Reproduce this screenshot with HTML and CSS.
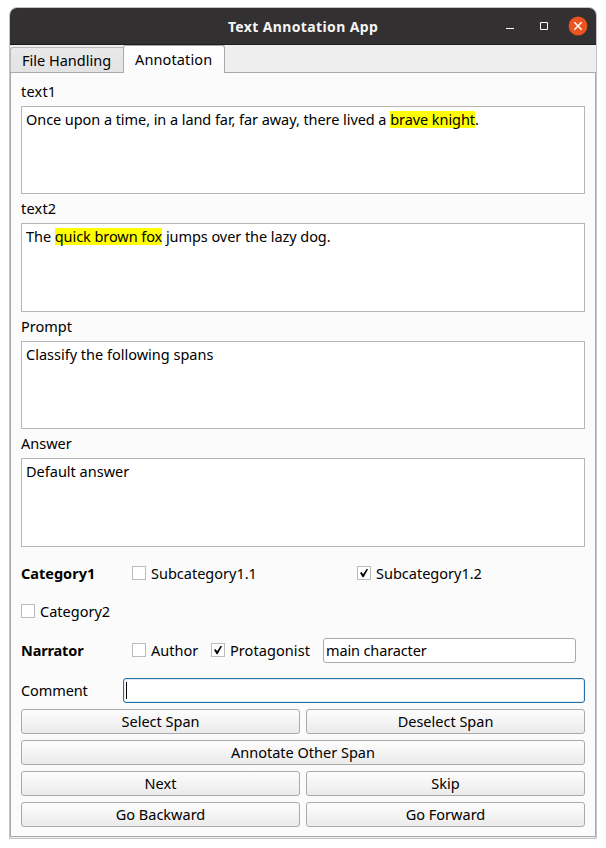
FILE: index.html
```html
<!DOCTYPE html>
<html lang="en">
<head>
<meta charset="utf-8">
<title>Text Annotation App</title>
<link rel="stylesheet" href="styles.css">
</head>
<body>
<div class="window">
  <header class="titlebar">
    <h1 class="title">Text Annotation App</h1>
    <div class="controls">
      <svg class="control" viewBox="0 0 20 20"><path d="M6 12.500h8" stroke="#fff" fill="none"/></svg>
      <svg class="control" viewBox="0 0 20 20"><path d="M6.500 6.500h7v7h-7z" stroke="#fff" fill="none"/></svg>
      <svg class="control" viewBox="0 0 20 20"><circle cx="10" cy="10" r="9.400" fill="#e95420"/><path d="M6.300 6.300l7.400 7.400M13.700 6.300l-7.400 7.400" stroke="#fff" stroke-width="1.500" fill="none"/></svg>
    </div>
  </header>
  <nav class="tabs">
    <div class="tab">File Handling</div>
    <div class="tab tab-active">Annotation</div>
  </nav>
  <main class="pane">
    <div class="label loose">text1</div>
    <div class="textbox tight">Once upon a time, in a land far, far away, there lived a <mark>brave knight</mark>.</div>
    <div class="label loose">text2</div>
    <div class="textbox tall tight">The <mark>quick brown fox</mark> jumps over the lazy dog.</div>
    <div class="label">Prompt</div>
    <div class="textbox">Classify the following spans</div>
    <div class="label">Answer</div>
    <div class="textbox tall">Default answer</div>

    <div class="row row-category1">
      <b class="group">Category1</b>
      <div class="check wide"><i class="box"></i>Subcategory1.1</div>
      <div class="check"><i class="box"><svg viewBox="0 0 12 12"><path d="M2 6L3.600 5.100L5.100 7.300L8.700 1.800L10 2.200L5.600 10.200L4.700 10.200Z"/></svg></i>Subcategory1.2</div>
    </div>
    <div class="row row-category2">
      <div class="check"><i class="box"></i>Category2</div>
    </div>
    <div class="row row-narrator">
      <b class="group narrator">Narrator</b>
      <div class="check author"><i class="box"></i>Author</div>
      <div class="check protagonist"><i class="box"><svg viewBox="0 0 12 12"><path d="M2 6L3.600 5.100L5.100 7.300L8.700 1.800L10 2.200L5.600 10.200L4.700 10.200Z"/></svg></i>Protagonist</div>
      <div class="input role">main character</div>
    </div>
    <div class="row row-comment">
      <div class="comment-label">Comment</div>
      <div class="input focused"><i class="caret"></i></div>
    </div>
    <div class="buttons">
      <div class="button">Select Span</div>
      <div class="button">Deselect Span</div>
      <div class="button full">Annotate Other Span</div>
      <div class="button">Next</div>
      <div class="button">Skip</div>
      <div class="button">Go Backward</div>
      <div class="button">Go Forward</div>
    </div>
  </main>
</div>
</body>
</html>
```
FILE: styles.css
```css
* { box-sizing: border-box; }
body {
  margin: 0;
  padding: 7px 9px;
  background: #fff;
  color: #000;
  font: 14.5px/18px "Noto Sans", "Open Sans", sans-serif;
  white-space: nowrap;
}
.window {
  width: 588px;
  height: 832px;
  display: flex;
  flex-direction: column;
  border: 1px solid #c3c3c3;
  border-radius: 8px 8px 0 0;
  background: #eee;
  overflow: hidden;
}
.titlebar {
  flex: none;
  height: 37px;
  display: grid;
  grid-template-columns: 1fr auto 1fr;
  align-items: center;
  background: #323030;
  border-bottom: 1px solid #1c1c1c;
  color: #f5f5f5;
}
.title {
  grid-column: 2;
  margin: 2px 0 0;
  font-size: 14px;
  font-weight: 700;
  line-height: 18px;
  letter-spacing: 0.37px;
}
.controls { display: flex; justify-content: flex-end; gap: 14px; padding-right: 8px; }
.control { width: 20px; height: 20px; display: block; }
.tabs { flex: none; height: 27px; display: flex; align-items: flex-end; }
.tab {
  width: 113px;
  height: 25px;
  padding: 3px 0 0 11px;
  border: 1px solid #b9b9b9;
  border-width: 1px 0 0 1px;
  border-radius: 3px 0 0 0;
  background: linear-gradient(#e9e9e9, #e3e3e3);
}
.tab-active {
  width: 102px;
  height: 28px;
  margin-bottom: -1px;
  padding: 4px 0 0 11px;
  border-color: #a9a9a9;
  border-width: 1px 1px 0;
  border-radius: 3px 3px 0 0;
  background: linear-gradient(#fff, #fbfbfb);
  letter-spacing: 0.12px;
  z-index: 1;
}
.pane {
  flex: none;
  height: 765px;
  padding: 9px 10px 0;
  border: 1px solid #aaa;
  background: #fbfbfb;
}
.label { height: 24px; }
.loose { letter-spacing: 0.2px; }
.textbox {
  height: 88px;
  padding: 3px 4px;
  border: 1px solid #b6b6b6;
  background: #fff;
  margin-bottom: 5px;
}
.tall { height: 89px; }
.tight { letter-spacing: -0.065px; }
mark {
  display: inline-block;
  height: 17px;
  line-height: 16px;
  margin-top: 1px;
  background: #ff0;
  color: #000;
}
.row { display: flex; align-items: center; }
.row-category1 { height: 42px; }
.row-category2 { height: 34px; }
.row-narrator { height: 44px; }
.row-comment { height: 36px; }
.group { width: 111px; }
.narrator { letter-spacing: -0.15px; }
.check { display: flex; align-items: center; gap: 5px; }
.wide { width: 225px; }
.author { width: 79px; }
.protagonist { width: 112px; letter-spacing: 0.07px; }
.box { width: 14px; height: 14px; border: 1px solid #bcbcbc; background: #fff; }
.box svg { display: block; width: 12px; height: 12px; }
.input {
  height: 25px;
  display: flex;
  align-items: center;
  padding-left: 2px;
  border: 1px solid #aaa;
  border-radius: 3px;
  background: #fff;
}
.role { width: 253px; letter-spacing: -0.13px; }
.comment-label { width: 102px; letter-spacing: -0.1px; }
.focused { flex: 1; border-color: #2272a8; box-shadow: inset 0 0 0 1px #e3e9f0; }
.caret { width: 1px; height: 17px; background: #000; }
.buttons { display: grid; grid-template-columns: 1fr 1fr; gap: 6px; padding-top: 1px; }
.button {
  height: 25px;
  display: flex;
  align-items: center;
  justify-content: center;
  padding-bottom: 2px;
  border: 1px solid #aaa;
  border-radius: 3px;
  background: linear-gradient(#fdfdfd, #ebebeb);
}
.full { grid-column: 1 / -1; }
```
